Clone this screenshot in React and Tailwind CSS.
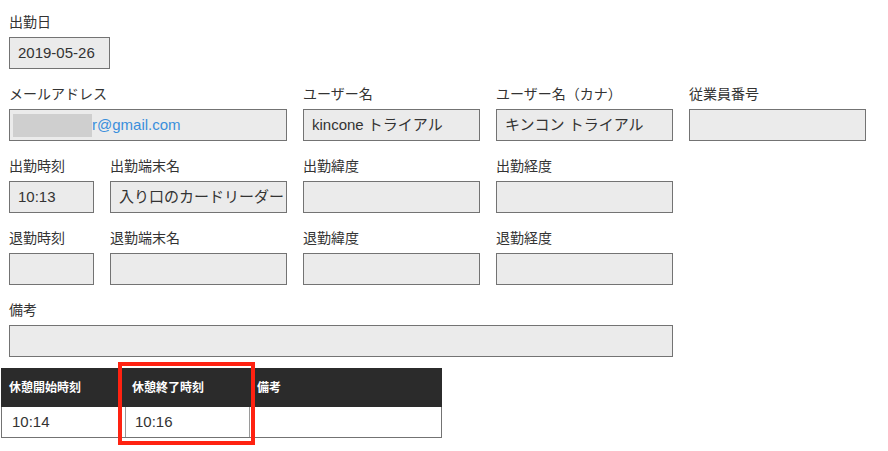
const font = { fontFamily: '"Liberation Sans", "Noto Sans CJK JP", sans-serif' };

function Field({ label, value, className = "", boxClass = "w-full", children }) {
  return (
    <div className={className}>
      <div className="h-5 text-[14px] leading-5 text-[#333] mb-[5px]">{label}</div>
      <div
        className={`${boxClass} h-8 border border-[#737373] bg-[#ebebeb] pl-2 flex items-center text-[15px] text-[#333] whitespace-nowrap overflow-hidden`}
      >
        {children || value}
      </div>
    </div>
  );
}

export default function App() {
  return (
    <div className="w-[888px] h-[451px] bg-white overflow-hidden" style={font}>
      {/* form fields */}
      <div className="pl-[9px] pt-3 grid grid-cols-[85px_177px_177px_177px_177px] gap-x-4 gap-y-[15px]">
        <Field label="出勤日" value="2019-05-26" className="col-span-2" boxClass="w-[101px]" />
        <div className="col-span-3" />

        <Field label="メールアドレス" className="col-span-2">
          <span className="-ml-[5px] w-[79px] h-[23px] bg-[#cfcfcf] shrink-0" />
          <span className="text-[#3a8fdc]">r@gmail.com</span>
        </Field>
        <Field label="ユーザー名" value="kincone トライアル" />
        <Field label="ユーザー名（カナ）" value="キンコン トライアル" />
        <Field label="従業員番号" value="" />

        <Field label="出勤時刻" value="10:13" />
        <Field label="出勤端末名" value="入り口のカードリーダー" />
        <Field label="出勤緯度" value="" />
        <Field label="出勤経度" value="" />
        <div />

        <Field label="退勤時刻" value="" />
        <Field label="退勤端末名" value="" />
        <Field label="退勤緯度" value="" />
        <Field label="退勤経度" value="" />
        <div />

        <Field label="備考" value="" className="col-span-4" />
      </div>

      {/* break table */}
      <div className="relative ml-[1px] mt-[11px] w-[441px]">
        <div className="grid grid-cols-[123px_125px_193px] h-[39px] bg-[#2b2b2b] text-white text-[12px] font-bold items-center">
          <div className="pl-2">休憩開始時刻</div>
          <div className="pl-2">休憩終了時刻</div>
          <div className="pl-2">備考</div>
        </div>
        <div className="grid grid-cols-[123px_125px_193px] h-[31px] border-x border-b border-[#737373] text-[15px] text-[#333]">
          <div className="pl-[10px] flex items-center">10:14</div>
          <div className="border-x border-[#9a9a9a] pl-[9px] flex items-center">10:16</div>
          <div />
        </div>

        {/* highlight */}
        <div className="absolute left-[117px] top-[-6px] w-[137px] h-[83px] border-4 border-[#ff2211]" />
      </div>
    </div>
  );
}
